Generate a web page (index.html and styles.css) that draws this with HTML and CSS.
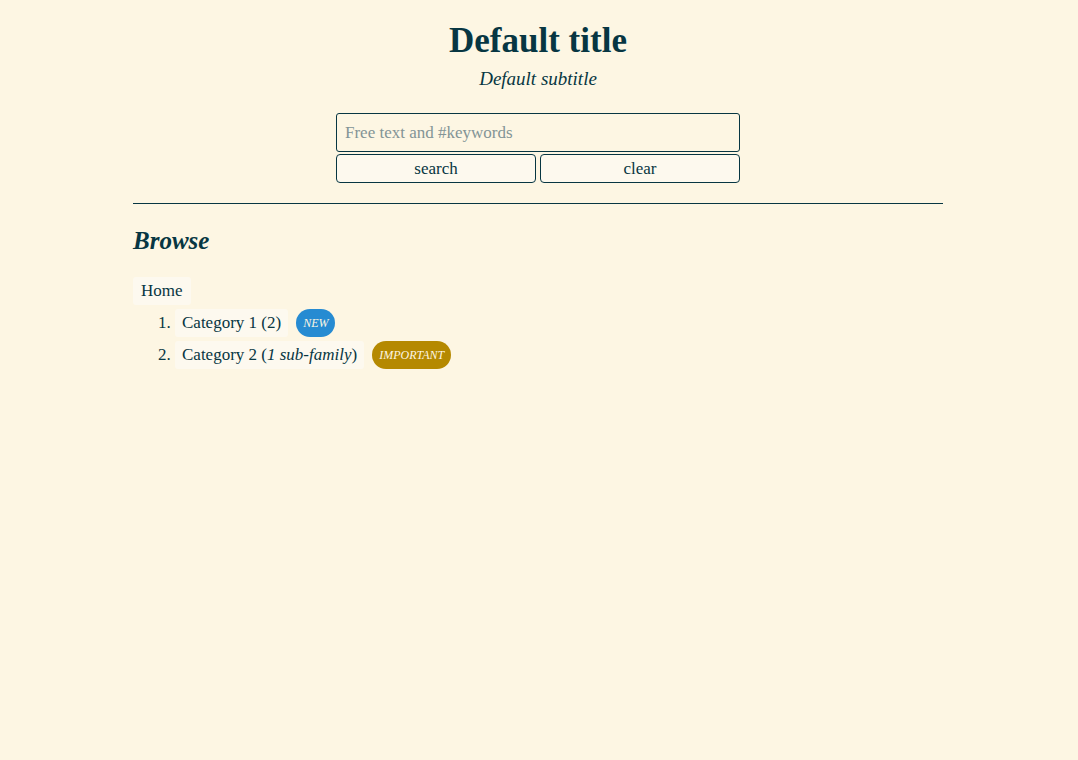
FILE: index.html
```html
<!DOCTYPE html>
<html lang="en">
<head>
<meta charset="utf-8">
<title>Default title</title>
<link rel="stylesheet" href="styles.css">
</head>
<body>
<header class="header">
  <h1 class="title">Default title</h1>
  <p class="subtitle">Default subtitle</p>
  <form class="search">
    <input class="search-input" type="text" placeholder="Free text and #keywords">
    <div class="search-buttons">
      <button class="btn" type="button">search</button>
      <button class="btn" type="button">clear</button>
    </div>
  </form>
</header>
<main class="main">
  <hr class="rule">
  <h2 class="section-title">Browse</h2>
  <a class="crumb home" href="#">Home</a>
  <ol class="cats">
    <li class="cat"><a class="crumb" href="#">Category 1 (2)</a><span class="badge badge-new">NEW</span></li>
    <li class="cat"><a class="crumb" href="#">Category 2 (<em>1 sub-family</em>)</a><span class="badge badge-important">IMPORTANT</span></li>
  </ol>
</main>
</body>
</html>
```
FILE: styles.css
```css
html, body {
  margin: 0;
  padding: 0;
}
body {
  background: #fdf6e3;
  color: #073642;
  font-family: "Liberation Serif", "DejaVu Serif", serif;
  font-size: 17px;
  padding-right: 2px;
}
.header {
  display: flex;
  flex-direction: column;
  align-items: center;
  padding-top: 21px;
}
.title {
  margin: 0;
  font-size: 35px;
  font-weight: bold;
  line-height: 40px;
}
.subtitle {
  margin: 0;
  margin-top: 7px;
  font-style: italic;
  font-size: 19px;
  line-height: 22px;
}
.search {
  width: 404px;
  margin-top: 23px;
  display: flex;
  flex-direction: column;
  gap: 2px;
}
.search-input {
  box-sizing: border-box;
  width: 100%;
  height: 39px;
  border: 1px solid #073642;
  border-radius: 3px;
  background: #fdf6e3;
  padding: 0 8px;
  font-family: inherit;
  font-size: 17px;
  color: #073642;
}
.search-input::placeholder {
  color: #839496;
}
.search-buttons {
  display: grid;
  grid-template-columns: 1fr 1fr;
  gap: 4px;
}
.btn {
  height: 29px;
  border: 1px solid #073642;
  border-radius: 4px;
  background: #fdf9ee;
  color: #073642;
  font-family: inherit;
  font-size: 17px;
  padding: 0;
}
.main {
  width: 810px;
  margin: 0 auto;
}
.rule {
  margin: 20px 0 0;
  border: 0;
  border-top: 1px solid #073642;
}
.section-title {
  margin: 22px 0 21px;
  font-size: 25px;
  font-style: italic;
  font-weight: bold;
  line-height: 30px;
}
.crumb {
  display: inline-block;
  background: #fdf9ef;
  color: #073642;
  text-decoration: none;
  padding: 0 7px;
  line-height: 28px;
  border-radius: 3px;
  font-size: 17px;
}
.home {
  padding: 0 8px;
}
.cats {
  margin: 4px 0 0;
  padding-left: 42px;
  display: flex;
  flex-direction: column;
  gap: 4px;
  font-size: 17px;
}
.cat::marker {
  color: #073642;
}
.badge {
  display: inline-block;
  margin-left: 8px;
  padding: 0 7px;
  line-height: 28px;
  border-radius: 14px;
  color: #fdf6e3;
  font-size: 12px;
  font-style: italic;
  vertical-align: top;
}
.badge-new {
  background: #268bd2;
}
.badge-important {
  background: #b58900;
}
```
